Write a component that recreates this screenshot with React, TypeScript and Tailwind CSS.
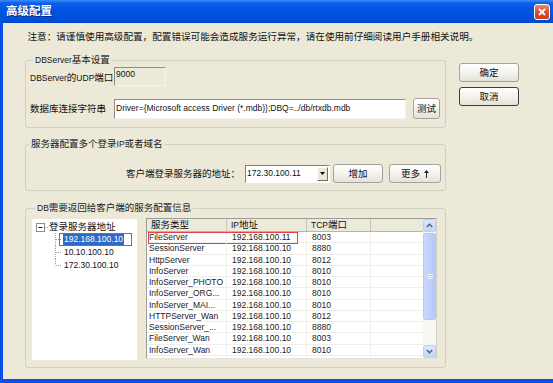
import React from 'react';

const rows: [string, string, string][] = [
  ['FileServer', '192.168.100.11', '8003'],
  ['SessionServer', '192.168.100.10', '8880'],
  ['HttpServer', '192.168.100.10', '8012'],
  ['InfoServer', '192.168.100.10', '8010'],
  ['InfoServer_PHOTO', '192.168.100.10', '8010'],
  ['InfoServer_ORG...', '192.168.100.10', '8010'],
  ['InfoServer_MAI...', '192.168.100.10', '8010'],
  ['HTTPServer_Wan', '192.168.100.10', '8012'],
  ['SessionServer_...', '192.168.100.10', '8880'],
  ['FileServer_Wan', '192.168.100.10', '8003'],
  ['InfoServer_Wan', '192.168.100.10', '8010'],
];

// latin runs render a bit smaller so they keep the narrow width of the old UI font
function Mix({ text }: { text: string }) {
  return (
    <>
      {text.split(/([\x20-\x7e]+)/).map((part, i) =>
        /^[\x20-\x7e]+$/.test(part) ? (
          <span key={i} className="text-[8.5px]">
            {part}
          </span>
        ) : (
          part
        )
      )}
    </>
  );
}

function XpButton({ label, focused, className }: { label: React.ReactNode; focused?: boolean; className: string }) {
  return (
    <button
      className={`flex items-center justify-center rounded-[3px] border bg-[linear-gradient(180deg,#ffffff_0%,#f5f4ef_45%,#e4e2d9_100%)] text-[9.5px] leading-none text-[#111] ${
        focused ? 'border-[#3c3c3c]' : 'border-[#a3a39c]'
      } ${className}`}
    >
      {label}
    </button>
  );
}

function Group({ title, children, className }: { title: string; children: React.ReactNode; className?: string }) {
  return (
    <fieldset className={`rounded-[3px] border border-[#d0d0bf] ${className ?? ''}`}>
      <legend className="ml-[3px] px-[2px] text-[9.5px] leading-[12px] text-[#1a1a1a]">
        <Mix text={title} />
      </legend>
      {children}
    </fieldset>
  );
}

function ScrollArrow({ up }: { up?: boolean }) {
  return (
    <div className="flex h-[13px] items-center justify-center rounded-[2px] border border-[#bcd0fb] bg-[linear-gradient(180deg,#dce6fd_0%,#c3d4fb_100%)]">
      <svg width="7" height="5" viewBox="0 0 7 5">
        <path d={up ? 'M0.8 4 L3.5 1.3 L6.2 4' : 'M0.8 1 L3.5 3.7 L6.2 1'} fill="none" stroke="#4d6185" strokeWidth="1.5" />
      </svg>
    </div>
  );
}

export default function App() {
  return (
    <div className="flex h-[383px] w-[553px] flex-col overflow-hidden bg-[#ece9d8] font-['Liberation_Sans','Noto_Sans_CJK_SC',sans-serif] text-[#111]">
      {/* Title bar */}
      <div className="flex h-[23px] items-center justify-between bg-[linear-gradient(180deg,#3d8bf7_0%,#0b5ee9_14%,#0054e3_45%,#0050db_85%,#0046c9_100%)] pl-[6px] pr-[3px]">
        <span className="text-[11.5px] font-bold leading-none text-white [text-shadow:1px_1px_#0a2a8a]">高级配置</span>
        <div className="flex h-[16px] w-[16px] items-center justify-center rounded-[3px] border border-white bg-[linear-gradient(180deg,#e98a6c_0%,#dc4f2c_50%,#c7401f_100%)]">
          <svg width="8" height="8" viewBox="0 0 8 8">
            <path d="M1 1 L7 7 M7 1 L1 7" stroke="white" strokeWidth="1.8" />
          </svg>
        </div>
      </div>

      {/* Body */}
      <div className="flex flex-1 border-b-[4px] border-l-[3px] border-[#0b50e4]">
        <div className="flex w-[443px] flex-col pl-[22px]">
          <p className="mt-[7px] whitespace-nowrap pl-[2.5px] text-[9.6px] leading-[14px]">
            注意：请谨慎使用高级配置，配置错误可能会造成服务运行异常，请在使用前仔细阅读用户手册相关说明。
          </p>

          <Group title="DBServer基本设置" className="mt-[10px] pb-[8px] pl-[4px]">
            <div className="mt-[1px] flex h-[19px] items-center">
              <span className="w-[84px] whitespace-nowrap pt-[3px] text-[9.5px] leading-none">
                <Mix text="DBServer的UDP端口" />
              </span>
              <div className="h-[19px] w-[52px] border border-b-[#f4f3ee] border-l-[#8d8d88] border-r-[#f4f3ee] border-t-[#8d8d88] bg-[#ece9d8] pl-[1px] text-[8.5px] leading-[13px]">
                9000
              </div>
            </div>
            <div className="mt-[12px] flex h-[21px] items-center">
              <span className="w-[84px] text-[9.5px] leading-none">数据库连接字符串</span>
              <div className="flex h-[20px] w-[292px] items-center overflow-hidden whitespace-nowrap border border-b-[#f4f3ee] border-l-[#8d8d88] border-r-[#f4f3ee] border-t-[#8d8d88] bg-white pl-[1px] text-[8.5px] leading-none">
                Driver={'{'}Microsoft access Driver (*.mdb){'}'};DBQ=../db/rtxdb.mdb
              </div>
              <XpButton label="测试" className="ml-[7px] h-[21px] w-[27px]" />
            </div>
          </Group>

          <Group title="服务器配置多个登录IP或者域名" className="mt-[10px] pb-[7px] pr-[4px]">
            <div className="mt-[14px] flex h-[19px] items-center justify-end">
              <span className="mr-[5px] text-[9.5px] leading-none">客户端登录服务器的地址：</span>
              <div className="flex h-[18px] w-[85px] items-stretch border border-b-white border-l-[#808080] border-r-white border-t-[#808080] bg-white">
                <span className="flex flex-1 items-center pl-[1px] text-[8.5px] leading-none">172.30.100.11</span>
                <div className="m-[1px] flex w-[11px] items-center justify-center border border-b-[#716f64] border-l-white border-r-[#716f64] border-t-white bg-[#ece9d8]">
                  <svg width="5" height="3" viewBox="0 0 5 3">
                    <path d="M0 0 H5 L2.5 3 Z" fill="#000" />
                  </svg>
                </div>
              </div>
              <XpButton label="增加" className="ml-[3px] h-[19px] w-[50px]" />
              <XpButton
                label={
                  <span className="flex items-center gap-[4px]">
                    更多
                    <svg width="5" height="8" viewBox="0 0 5 8">
                      <path d="M2.5 0 L5 3 H3 V8 H2 V3 H0 Z" fill="#222" />
                    </svg>
                  </span>
                }
                className="ml-[6px] h-[19px] w-[52px]"
              />
            </div>
          </Group>

          <Group title="DB需要返回给客户端的服务配置信息" className="mt-[11px] pb-[7px] pl-[6px] pr-[8px]">
            <div className="mt-[5px] flex h-[141px] gap-[9px]">
              {/* Tree */}
              <div className="w-[105px] bg-white pt-[1px] text-[9.5px]">
                <div className="flex h-[13px] items-center">
                  <svg width="17" height="13" viewBox="0 0 17 13" className="shrink-0">
                    <rect x="4.5" y="3.5" width="8" height="8" fill="white" stroke="#8a8a8a" />
                    <path d="M6.5 7.5 H10.5" stroke="#222" />
                    <path d="M13 7.5 H16.5" stroke="#a0a0a0" strokeDasharray="1 1" />
                  </svg>
                  <span className="leading-none">登录服务器地址</span>
                </div>
                {['192.168.100.10', '10.10.100.10', '172.30.100.10'].map((ip, i) => (
                  <div key={ip} className="relative flex h-[13px] items-center">
                    <svg width="31" height="13" viewBox="0 0 31 13" className="shrink-0">
                      <path d={i === 2 ? 'M23.5 0 V6.5' : 'M23.5 0 V13'} stroke="#a0a0a0" strokeDasharray="1 1" />
                      <path d="M24 6.5 H30" stroke="#a0a0a0" strokeDasharray="1 1" />
                    </svg>
                    <span className={`px-[1px] text-[8.5px] leading-[11px] ${i === 0 ? 'bg-[#316ac5] text-white' : ''}`}>{ip}</span>
                    {i === 0 && <span className="absolute left-[27px] top-0 h-[13px] w-[73px] border border-[#e84040]" />}
                  </div>
                ))}
              </div>

              {/* List */}
              <div className="-mt-[1px] flex h-[141px] w-[291px] border border-b-[#e6e4dc] border-l-[#9d9c96] border-r-[#cfcdc4] border-t-[#9d9c96] bg-white">
                <div className="flex flex-1 flex-col">
                  <div className="flex h-[13px] border-b border-[#b9b6a7] bg-[#ebeadb] text-[9.5px] leading-none">
                    <div className="flex w-[80px] items-center border-r border-[#c7c4b6] pl-[4px]">服务类型</div>
                    <div className="flex w-[80px] items-center border-r border-[#c7c4b6] pl-[4px]">
                      <Mix text="IP地址" />
                    </div>
                    <div className="flex w-[64px] items-center border-r border-[#c7c4b6] pl-[4px]">
                      <Mix text="TCP端口" />
                    </div>
                    <div className="flex-1" />
                  </div>
                  {rows.map(([name, ip, port], i) => (
                    <div key={i} className="relative flex h-[11.25px] border-b border-[#efeee8] text-[8.5px] leading-[10px] text-[#222]">
                      <div className="flex w-[80px] items-center overflow-hidden whitespace-nowrap border-r border-[#efeee8] pl-[2px]">{name}</div>
                      <div className="flex w-[80px] items-center border-r border-[#efeee8] pl-[5px]">{ip}</div>
                      <div className="flex w-[64px] items-center border-r border-[#efeee8] pl-[5px]">{port}</div>
                      <div className="flex-1" />
                      {i === 0 && <span className="absolute left-[1px] top-0 h-[12px] w-[150px] border border-[#e84040]" />}
                    </div>
                  ))}
                </div>
                {/* Scrollbar */}
                <div className="flex w-[13px] flex-col bg-[#f7f6f1]">
                  <ScrollArrow up />
                  <div className="mt-[1px] flex h-[87px] items-center justify-center rounded-[2px] border border-[#b7cbf8] bg-[linear-gradient(90deg,#c9d8fc_0%,#bccffb_60%,#b3c8f7_100%)]">
                    <svg width="6" height="6" viewBox="0 0 6 6">
                      <path d="M0 0.5 H6 M0 2.5 H6 M0 4.5 H6" stroke="#eef3ff" />
                    </svg>
                  </div>
                  <div className="flex-1" />
                  <ScrollArrow />
                </div>
              </div>
            </div>
          </Group>
        </div>

        {/* Right buttons */}
        <div className="ml-[13px] flex flex-col gap-[5px] pt-[40px]">
          <XpButton label="确定" className="h-[19px] w-[60px]" />
          <XpButton label="取消" focused className="h-[19px] w-[60px]" />
        </div>
      </div>
    </div>
  );
}
